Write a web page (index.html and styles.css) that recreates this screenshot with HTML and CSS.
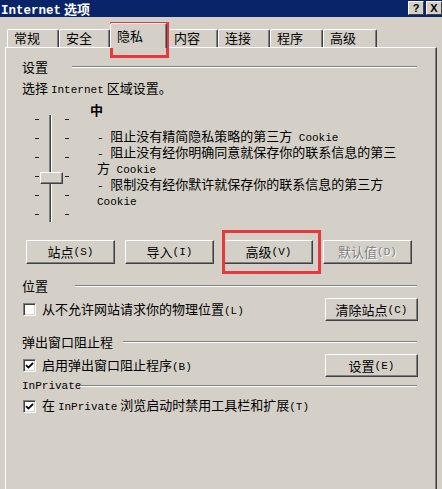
FILE: index.html
```html
<!DOCTYPE html>
<html lang="zh">
<head>
<meta charset="utf-8">
<title>Internet 选项</title>
<link rel="stylesheet" href="styles.css">
</head>
<body>
<div class="window">
  <div class="titlebar">
    <span class="title"><span class="en-b">Internet</span> 选项</span>
    <div class="tb-btns"><span class="tb-btn">?</span><span class="tb-btn">X</span></div>
  </div>
  <div class="tabs">
    <div class="tab w52">常规</div>
    <div class="tab w51">安全</div>
    <div class="tab active w57">隐私</div>
    <div class="tab w51">内容</div>
    <div class="tab w52">连接</div>
    <div class="tab w53">程序</div>
    <div class="tab w54">高级</div>
  </div>
  <div class="panel">
    <div class="group-head"><span class="label lw-settings">设置</span><i class="rule"></i></div>
    <div class="text-line">选择 <span class="en">Internet</span> 区域设置。</div>
    <div class="privacy">
      <div class="slider">
        <div class="ticks"><i></i><i></i><i></i><i></i><i></i><i></i></div>
        <div class="track"><span class="thumb"></span></div>
        <div class="ticks"><i></i><i></i><i></i><i></i><i></i><i></i></div>
      </div>
      <div class="desc">
        <div class="level">中</div>
        <div class="bullets">
          <div><span class="en">- </span>阻止没有精简隐私策略的第三方<span class="en"> Cookie</span></div>
          <div><span class="en">- </span>阻止没有经你明确同意就保存你的联系信息的第三</div>
          <div>方<span class="en"> Cookie</span></div>
          <div><span class="en">- </span>限制没有经你默许就保存你的联系信息的第三方</div>
          <div><span class="en">Cookie</span></div>
        </div>
      </div>
    </div>
    <div class="btn-row">
      <div class="btn">站点<span class="en">(S)</span></div>
      <div class="btn">导入<span class="en">(I)</span></div>
      <div class="btn">高级<span class="en">(V)</span></div>
      <div class="btn disabled">默认值<span class="en">(D)</span></div>
    </div>
    <div class="group-head gh-location"><span class="label lw-location">位置</span><i class="rule"></i></div>
    <div class="opt-row">
      <div class="check"><span class="box"></span><span>从不允许网站请求你的物理位置<span class="en">(L)</span></span></div>
      <div class="btn side">清除站点<span class="en">(C)</span></div>
    </div>
    <div class="group-head gh-popup"><span class="label lw-popup">弹出窗口阻止程</span><i class="rule"></i></div>
    <div class="opt-row">
      <div class="check"><span class="box"><svg width="9" height="9" viewBox="0 0 9 9"><path d="M1 4.2 L3.4 6.6 L8 2" fill="none" stroke="#000" stroke-width="1.8"/></svg></span><span>启用弹出窗口阻止程序<span class="en">(B)</span></span></div>
      <div class="btn side">设置<span class="en">(E)</span></div>
    </div>
    <div class="group-head gh-inprivate"><span class="label lw-inprivate en">InPrivate</span><i class="rule"></i></div>
    <div class="opt-row last">
      <div class="check"><span class="box"><svg width="9" height="9" viewBox="0 0 9 9"><path d="M1 4.2 L3.4 6.6 L8 2" fill="none" stroke="#000" stroke-width="1.8"/></svg></span><span>在 <span class="en">InPrivate</span> 浏览启动时禁用工具栏和扩展<span class="en">(T)</span></span></div>
    </div>
  </div>
  <div class="mark mark-tab"></div>
  <div class="mark mark-btn"></div>
</div>
</body>
</html>
```
FILE: styles.css
```css
* { box-sizing: border-box; margin: 0; padding: 0; }
html, body { width: 442px; height: 489px; overflow: hidden; background: #d4d0c8; }
body {
  font-family: "Noto Sans CJK SC", "Noto Sans", sans-serif;
  font-size: 13px;
  line-height: 14px;
  color: #000;
}
.en { font-family: "Liberation Mono", "Noto Sans CJK SC", monospace; font-size: 11px; }

.window { position: relative; width: 442px; height: 489px; background: #d4d0c8; overflow: hidden; }

.titlebar {
  height: 17px;
  background: #0a246a;
  display: flex;
  justify-content: space-between;
  padding-left: 1px;
}
.title { color: #fff; font-weight: bold; font-size: 13px; line-height: 17px; white-space: nowrap; }
.title .en-b { font-family: "Liberation Mono", monospace; font-size: 12.5px; font-weight: bold; }
.tb-btns { display: flex; gap: 2px; padding-top: 1px; }
.tb-btn {
  width: 16px; height: 14px;
  background: #d4d0c8;
  border: 1px solid;
  border-color: #fff #404040 #404040 #fff;
  font: bold 11px/12px "Liberation Sans", sans-serif;
  text-align: center;
  color: #000;
}

.tabs { display: flex; align-items: flex-end; height: 30px; padding-left: 7px; }
.tab {
  height: 18px;
  border: 1px solid;
  border-bottom: none;
  border-color: #fff #404040 transparent #fff;
  border-radius: 2px 2px 0 0;
  box-shadow: inset -1px 0 0 #808080;
  padding-left: 6px;
  line-height: 16px;
  white-space: nowrap;
}
.tab.active {
  height: 25px;
  margin-bottom: -1px;
  position: relative;
  z-index: 1;
  background: #d4d0c8;
  padding-top: 4px;
}
.w51 { width: 51px; }
.w52 { width: 52px; }
.w53 { width: 53px; }
.w54 { width: 54px; }
.w57 { width: 57px; }

.panel {
  margin-left: 5px;
  width: 432px;
  height: 445px;
  border-top: 1px solid #fff;
  border-left: 1px solid #fff;
  border-right: 1px solid #404040;
  box-shadow: inset -1px 0 0 #808080;
  padding: 12px 19px 0 16px;
}

.group-head { display: flex; align-items: center; height: 14px; white-space: nowrap; }
.group-head .label { flex: none; }
.rule { flex: 1; height: 2px; border-top: 1px solid #808080; border-bottom: 1px solid #fff; }
.lw-settings { width: 50px; }
.lw-location { width: 53px; }
.lw-popup { width: 101px; }
.lw-inprivate { width: 58px; }
.gh-location { margin-top: 15px; }
.gh-popup { margin-top: 14px; }
.gh-inprivate { margin-top: 2px; }

.text-line { margin-top: 7px; white-space: nowrap; }

.privacy { display: flex; height: 125px; }
.slider { display: flex; height: 107px; margin: 18px 0 0 13px; }
.ticks { display: flex; flex-direction: column; justify-content: space-between; width: 4px; padding: 4px 0 7px; }
.ticks i { display: block; height: 1px; background: #202020; }
.track {
  position: relative;
  width: 3px;
  margin: 0 13px 0 10px;
  border-left: 1px solid #808080;
  border-right: 1px solid #fff;
  background: #404040;
}
.thumb {
  position: absolute;
  left: -10px;
  top: 57px;
  width: 23px;
  height: 12px;
  background: #d4d0c8;
  border: 1px solid;
  border-color: #fff #404040 #404040 #fff;
  box-shadow: inset -1px -1px 0 #808080;
}
.desc { margin-left: 21px; padding-top: 6px; }
.level { font-weight: bold; }
.bullets { margin: 12px 0 0 7px; line-height: 13px; white-space: nowrap; }

.btn-row { display: flex; gap: 10px; margin: 18px 0 0 4px; }
.btn {
  width: 89px;
  height: 24px;
  display: flex;
  align-items: center;
  justify-content: center;
  background: #d4d0c8;
  border: 1px solid;
  border-color: #fff #404040 #404040 #fff;
  box-shadow: inset -1px -1px 0 #808080;
  white-space: nowrap;
}
.btn.disabled { color: #808080; text-shadow: 1px 1px 0 #fff; }
.btn.side { width: 93px; height: 23px; margin-right: -1px; }

.opt-row { display: flex; align-items: center; justify-content: space-between; height: 23px; margin-top: 5px; }
.opt-row.last { height: 14px; margin-top: 6px; }
.check { display: flex; align-items: center; gap: 6px; padding-left: 1px; white-space: nowrap; }
.box {
  width: 13px;
  height: 13px;
  flex: none;
  background: #fff;
  border: 1px solid;
  border-color: #808080 #fff #fff #808080;
  box-shadow: inset 1px 1px 0 #404040, inset -1px -1px 0 #d4d0c8;
  display: flex;
  align-items: center;
  justify-content: center;
}

.mark { position: absolute; border: 3px solid #e8383d; pointer-events: none; }
.mark-tab { left: 110px; top: 22px; width: 59px; height: 36px; }
.mark-btn { left: 222px; top: 230px; width: 99px; height: 44px; }
```
